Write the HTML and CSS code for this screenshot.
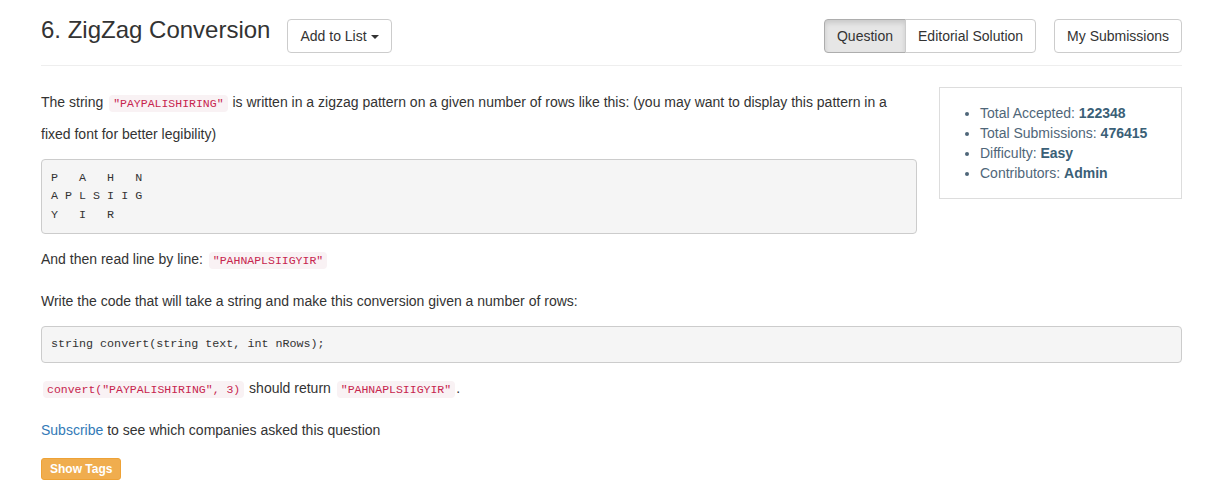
FILE: index.html
```html
<!DOCTYPE html>
<html>
<head>
<meta charset="utf-8">
<link rel="stylesheet" href="styles.css">
</head>
<body>
<div class="container">
  <div class="header">
    <h3 class="title">6. ZigZag Conversion</h3>
    <button class="btn add-list">Add to List <span class="caret"></span></button>
    <div class="header-right">
      <div class="btn-group">
        <button class="btn active first">Question</button><button class="btn last">Editorial Solution</button>
      </div>
      <button class="btn">My Submissions</button>
    </div>
  </div>
  <div class="main">
    <div class="content">
      <p>The string <code>"PAYPALISHIRING"</code> is written in a zigzag pattern on a given number of rows like this: (you may want to display this pattern in a fixed font for better legibility)</p>
<pre class="pattern">P   A   H   N
A P L S I I G
Y   I   R</pre>
      <p>And then read line by line: <code>"PAHNAPLSIIGYIR"</code></p>
      <p>Write the code that will take a string and make this conversion given a number of rows:</p>
<pre class="signature">string convert(string text, int nRows);</pre>
      <p><code>convert("PAYPALISHIRING", 3)</code> should return <code>"PAHNAPLSIIGYIR"</code>.</p>
      <p><a class="link" href="#">Subscribe</a> to see which companies asked this question</p>
      <button class="btn-tags">Show Tags</button>
    </div>
    <div class="sidebar">
      <ul class="stats">
        <li>Total Accepted: <b>122348</b></li>
        <li>Total Submissions: <b>476415</b></li>
        <li>Difficulty: <b>Easy</b></li>
        <li>Contributors: <b>Admin</b></li>
      </ul>
    </div>
  </div>
</div>
</body>
</html>
```
FILE: styles.css
```css
* { box-sizing: border-box; }
body {
  margin: 0;
  font-family: "Liberation Sans", Arial, sans-serif;
  font-size: 14px;
  color: #333;
  background: #fff;
}
.container {
  width: 1141px;
  margin: 0 auto;
}
.header {
  display: flex;
  align-items: flex-start;
  padding-bottom: 12px;
  border-bottom: 1px solid #eee;
}
.title {
  margin: 17px 0 0 0;
  font-size: 24px;
  font-weight: 500;
  line-height: 26.4px;
}
.btn {
  display: inline-block;
  padding: 6px 12px;
  font-family: inherit;
  font-size: 14px;
  line-height: 20px;
  color: #333;
  background: #fff;
  border: 1px solid #ccc;
  border-radius: 4px;
  margin: 0;
}
.add-list {
  margin: 19px 0 0 17px;
}
.caret {
  display: inline-block;
  width: 0;
  height: 0;
  margin-left: 0;
  vertical-align: middle;
  border-top: 4px solid #333;
  border-left: 4px solid transparent;
  border-right: 4px solid transparent;
}
.header-right {
  margin: 19px 0 0 auto;
  display: flex;
  gap: 18px;
}
.btn-group {
  display: flex;
}
.btn.first {
  border-top-right-radius: 0;
  border-bottom-right-radius: 0;
}
.btn.last {
  border-top-left-radius: 0;
  border-bottom-left-radius: 0;
  margin-left: -1px;
}
.btn.active {
  background: #e6e6e6;
  border-color: #adadad;
  box-shadow: inset 0 3px 5px rgba(0,0,0,.125);
}
.main {
  display: flex;
  align-items: flex-start;
  margin-top: 21px;
}
.content {
  width: 876px;
}
p {
  margin: 0 0 10px;
  line-height: 30px;
}
code {
  font-family: "Liberation Mono", "DejaVu Sans Mono", monospace;
  font-size: 11.5px;
  padding: 2px 4px;
  margin: 0 1px 0 2px;
  color: #c7254e;
  background: #f9f2f4;
  border-radius: 4px;
}
pre {
  margin: 0 0 10px;
  padding: 8.5px 9px;
  font-family: "Liberation Mono", "DejaVu Sans Mono", monospace;
  font-size: 11.7px;
  line-height: 18.57px;
  color: #333;
  background: #f5f5f5;
  border: 1px solid #ccc;
  border-radius: 4px;
}
.signature {
  margin-right: -265px;
}
.link {
  color: #337ab7;
  text-decoration: none;
}
.btn-tags {
  display: inline-block;
  margin-top: 3px;
  padding: 1px 8px;
  font-family: inherit;
  font-size: 12px;
  font-weight: bold;
  line-height: 18px;
  color: #fff;
  background: #f0ad4e;
  border: 1px solid #eea236;
  border-radius: 3px;
}
.sidebar {
  width: 243px;
  margin-left: auto;
  padding: 15px;
  border: 1px solid #ddd;
}
.stats {
  margin: 0;
  padding-left: 25px;
  color: #4f6679;
}
.stats li {
  line-height: 20px;
}
.stats b {
  color: #3a6077;
}
```
